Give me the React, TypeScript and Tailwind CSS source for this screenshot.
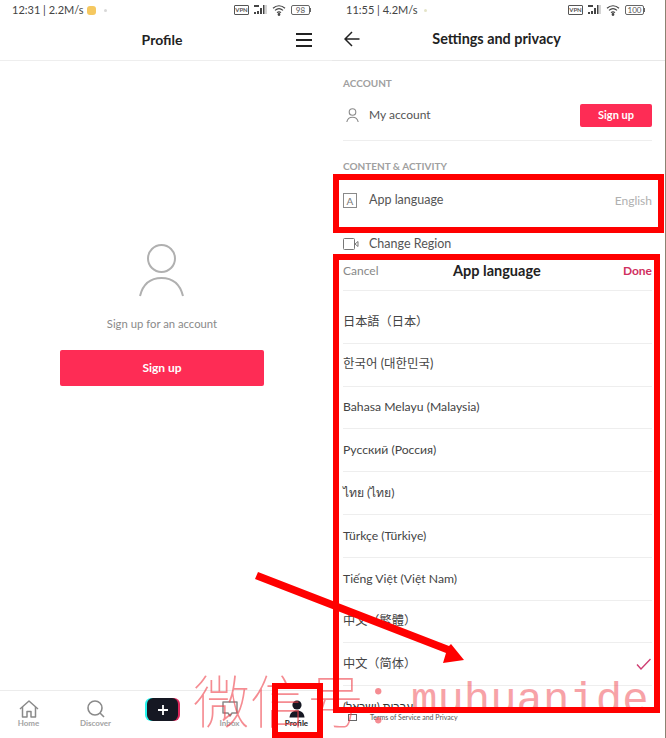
import React from 'react';

const sans = { fontFamily: 'Lato, "Noto Sans CJK SC", "Noto Sans CJK JP", "Noto Sans CJK KR", "Noto Sans", sans-serif' };

const languages = [
  '日本語（日本）',
  '한국어 (대한민국)',
  'Bahasa Melayu (Malaysia)',
  'Русский (Россия)',
  'ไทย (ไทย)',
  'Türkçe (Türkiye)',
  'Tiếng Việt (Việt Nam)',
  '中文（繁體）',
  '中文（简体）',
];

function StatusIcons({ battery }: { battery: string }) {
  return (
    <div className="flex items-center gap-[5px] text-[#555]">
      <span className="flex h-[10px] w-[15px] items-center justify-center rounded-[1px] border border-[#555] text-[6px] leading-none font-bold">VPN</span>
      <svg width="13" height="12" viewBox="0 0 13 12" fill="#444">
        <rect x="0" y="8" width="2" height="2" />
        <rect x="3" y="7" width="2" height="3" />
        <rect x="6" y="4" width="2" height="6" />
        <rect x="9" y="1" width="1.5" height="9" />
        <rect x="11.5" y="1" width="1" height="9" fill="#aaa" />
        <rect x="0" y="1" width="5" height="2" />
      </svg>
      <svg width="14" height="12" viewBox="0 0 14 12" fill="none" stroke="#444" strokeWidth="1.2">
        <path d="M1 4.2C4.6 1 9.4 1 13 4.2" />
        <path d="M3 6.4C5.4 4.3 8.6 4.3 11 6.4" />
        <path d="M5 8.6C6.2 7.6 7.8 7.6 9 8.6" />
        <circle cx="7" cy="10.5" r="0.8" fill="#444" />
      </svg>
      <div className="flex items-center">
        <span className="flex h-[10px] w-[19px] items-center justify-center rounded-[2px] border border-[#666] text-[8px] leading-none">{battery}</span>
        <span className="h-[4px] w-[1px] bg-[#666]" />
      </div>
    </div>
  );
}

function Tab({ label, active, children }: { label: string; active?: boolean; children: React.ReactNode }) {
  return (
    <div className="flex w-[67px] flex-col items-center">
      <div className="flex h-[18px] items-center justify-center">{children}</div>
      <span className={`text-[8px] leading-[10px] font-bold ${active ? 'text-[#222]' : 'text-[#a3a3a3]'}`}>{label}</span>
    </div>
  );
}

function ProfilePanel() {
  return (
    <div className="flex h-[738px] w-[332px] flex-col bg-white">
      <div className="flex h-[20px] items-center justify-between pr-[21px] pl-[12px]">
        <div className="flex items-center gap-[3px] text-[11px] text-[#444]">
          <span>12:31 | 2.2M/s</span>
          <span className="h-[9px] w-[9px] rounded-[3px] bg-[#f5c860]" />
          <span className="ml-[5px] h-[3px] w-[3px] rounded-full bg-[#d8d8d8]" />
        </div>
        <StatusIcons battery="98" />
      </div>
      <div className="relative flex h-[41px] items-center justify-center border-b border-[#eeeeee] pr-[8px] pb-[2px]">
        <span className="text-[14px] font-bold text-[#222]">Profile</span>
        <div className="absolute top-[13px] right-[20px] flex w-[16px] flex-col gap-[4px]">
          <span className="h-[2px] bg-[#222]" />
          <span className="h-[2px] bg-[#222]" />
          <span className="h-[2px] bg-[#222]" />
        </div>
      </div>
      <div className="flex flex-1 flex-col items-center pt-[183px] pr-[8px]">
        <svg width="48" height="54" viewBox="0 0 48 54" fill="none" stroke="#b0b0b0" strokeWidth="2">
          <circle cx="23.5" cy="14.5" r="13.5" />
          <path d="M2 52C5 40 13 34 23.5 34C34 34 42 40 45 52" />
        </svg>
        <p className="mt-[19px] text-[11.3px] leading-[14px] text-[#8a8a8a]">Sign up for an account</p>
        <button className="mt-[19px] h-[36px] w-[204px] rounded-[2px] bg-[#fe2c55] text-[12px] font-bold text-white">Sign up</button>
      </div>
      <div className="-ml-[5px] flex h-[48px] items-start border-t border-[#ececec] pt-[9px]">
        <Tab label="Home">
          <svg width="20" height="18" viewBox="0 0 20 18" fill="none" stroke="#8a8a8a" strokeWidth="1.5" strokeLinejoin="round">
            <path d="M1 9L10 1L19 9" />
            <path d="M3.5 7V17H8V11.5H12V17H16.5V7" />
          </svg>
        </Tab>
        <Tab label="Discover">
          <svg width="18" height="18" viewBox="0 0 18 18" fill="none" stroke="#8a8a8a" strokeWidth="1.6">
            <circle cx="8" cy="8" r="7" />
            <path d="M13 13L17 17" />
          </svg>
        </Tab>
        <div className="flex w-[67px] justify-center">
          <div className="relative -mt-[2px] h-[23px] w-[35px]">
            <div className="absolute inset-y-0 left-0 w-[26px] rounded-[6px] bg-[#25f4ee]" />
            <div className="absolute inset-y-0 right-0 w-[26px] rounded-[6px] bg-[#d9275a]" />
            <div className="absolute inset-y-0 left-[2px] flex w-[31px] items-center justify-center rounded-[6px] bg-[#161823]">
              <svg width="10" height="10" viewBox="0 0 10 10" stroke="#fff" strokeWidth="1.8"><path d="M5 0V10M0 5H10" /></svg>
            </div>
          </div>
        </div>
        <Tab label="Inbox">
          <svg width="18" height="18" viewBox="0 0 18 18" fill="none" stroke="#8a8a8a" strokeWidth="1.5" strokeLinejoin="round">
            <path d="M2 2H16V13H11L9 16L7 13H2Z" />
          </svg>
        </Tab>
        <Tab label="Profile" active>
          <svg width="16" height="18" viewBox="0 0 16 18" fill="#161823">
            <circle cx="8" cy="5" r="4.6" />
            <path d="M0.5 17.5C1 12.5 4 10.5 8 10.5C12 10.5 15 12.5 15.5 17.5Z" />
          </svg>
        </Tab>
      </div>
    </div>
  );
}

function SettingsPanel() {
  return (
    <div className="flex h-[738px] w-[334px] flex-col overflow-hidden border-r border-[#8c8272] bg-white">
      <div className="flex h-[20px] items-center justify-between pr-[20px] pl-[14px]">
        <div className="flex items-center gap-[6px] text-[11px] text-[#444]">
          <span>11:55 | 4.2M/s</span>
          <span className="h-[3px] w-[3px] rounded-full bg-[#e4e4c8]" />
        </div>
        <StatusIcons battery="100" />
      </div>
      <div className="relative flex h-[41px] items-center justify-center border-b border-[#e8e8e8] pr-[4px] pb-[2px]">
        <svg className="absolute top-[11px] left-[12px]" width="16" height="16" viewBox="0 0 16 16" fill="none" stroke="#222" strokeWidth="1.5">
          <path d="M15.5 8H1M8 1L1 8L8 15" />
        </svg>
        <span className="text-[14.4px] font-bold text-[#222]">Settings and privacy</span>
      </div>
      <div className="pr-[13px] pl-[11px]">
        <p className="mt-[16px] text-[10px] leading-[13px] font-bold text-[#a0a0a0]">ACCOUNT</p>
        <div className="flex h-[51px] items-center justify-between border-b border-[#eeeeee]">
          <div className="flex items-center gap-[10px]">
            <svg className="ml-[3px]" width="13" height="15" viewBox="0 0 13 15" fill="none" stroke="#8a8a8a" strokeWidth="1.1">
              <circle cx="6.5" cy="4" r="3.3" />
              <path d="M0.8 14C1.5 10.5 3.5 9.3 6.5 9.3C9.5 9.3 11.5 10.5 12.2 14" />
            </svg>
            <span className="text-[12px] text-[#555]">My account</span>
          </div>
          <button className="h-[23px] w-[72px] rounded-[2px] bg-[#fe2c55] text-[11px] font-bold text-white">Sign up</button>
        </div>
        <p className="mt-[19px] text-[10px] leading-[13px] font-bold text-[#a0a0a0]">CONTENT &amp; ACTIVITY</p>
        <div className="flex h-[55px] items-center justify-between">
          <div className="flex items-center gap-[12px]">
            <span className="flex h-[15px] w-[14px] items-center justify-center border border-[#8a8a8a] text-[10px] leading-none text-[#777]">A</span>
            <span className="text-[12.5px] text-[#555]">App language</span>
          </div>
          <span className="text-[12px] text-[#b0b0b0]">English</span>
        </div>
        <div className="flex h-[32px] items-center gap-[10px]">
          <svg width="16" height="12" viewBox="0 0 16 12" fill="none" stroke="#777" strokeWidth="1">
            <rect x="0.5" y="0.5" width="11" height="11" rx="1" />
            <path d="M12 6L15 3.5V8.5Z" />
          </svg>
          <span className="text-[12.5px] text-[#555]">Change Region</span>
        </div>
      </div>
      <div className="flex-1 bg-white pr-[13px] pl-[11px]">
        <div className="relative flex h-[22px] items-center justify-between">
          <span className="text-[12px] text-[#888]">Cancel</span>
          <span className="absolute left-[110px] text-[14.5px] font-bold text-[#222]">App language</span>
          <span className="text-[12px] font-bold text-[#d0315f]">Done</span>
        </div>
        <div className="h-[9px] border-b border-[#eeeeee]" />
        <div className="h-[10px]" />
        {languages.map((name, i) => (
          <div key={name} className="flex h-[42.8px] items-center justify-between border-b border-[#eeeeee]">
            <span className={`${i === 1 ? 'text-[12.5px]' : 'text-[12.2px]'} text-[#444]`}>{name}</span>
            {i === 8 && (
              <svg className="mr-[1px]" width="15" height="12" viewBox="0 0 15 12" fill="none" stroke="#cf3f73" strokeWidth="1.4">
                <path d="M1 6.5L5 11L14.5 1" />
              </svg>
            )}
          </div>
        ))}
        <div className="mt-[14px] text-[11.5px] leading-[13px] text-[#333]">
          <span dir="rtl" className="inline-block">עברית (ישראל)</span>
        </div>
        <div className="flex items-center gap-[13px] pl-[5px]">
          <span className="h-[7px] w-[9px] border border-[#666]" />
          <span className="text-[7px] leading-[9px] text-[#555]">Terms of Service and Privacy</span>
        </div>
      </div>
    </div>
  );
}

export default function App() {
  return (
    <div className="relative flex h-[738px] w-[666px] overflow-hidden bg-white" style={sans}>
      <ProfilePanel />
      <SettingsPanel />

      {/* watermark sits under the red marks */}
      <div className="absolute top-[660px] left-[193px] flex items-baseline whitespace-nowrap text-[#f0404a] opacity-60">
        <span className="text-[57px] leading-[76px] font-thin" style={{ fontFamily: '"Noto Sans CJK SC", sans-serif' }}>微信号：</span>
        <span className="relative -top-[10px] -ml-[10px] text-[44px] leading-[76px] font-normal opacity-80" style={{ fontFamily: '"Liberation Mono", monospace' }}>muhuanide</span>
      </div>

      {/* red annotations drawn over the screenshots */}
      <div className="absolute top-[174px] left-[333px] h-[59px] w-[331px] border-[6px] border-[#ff0000]" />
      <div className="absolute top-[254px] left-[333px] h-[459px] w-[327px] border-[6px] border-[#ff0000]" />
      <div className="absolute top-[683px] left-[272px] h-[55px] w-[51px] border-[6px] border-[#ff0000]" />
      <svg className="absolute inset-0" width="666" height="738" viewBox="0 0 666 738" fill="#ff0000">
        <path d="M258 572L255 579L446 653L443 663L464 660L451 644L449 646Z" />
      </svg>
    </div>
  );
}
